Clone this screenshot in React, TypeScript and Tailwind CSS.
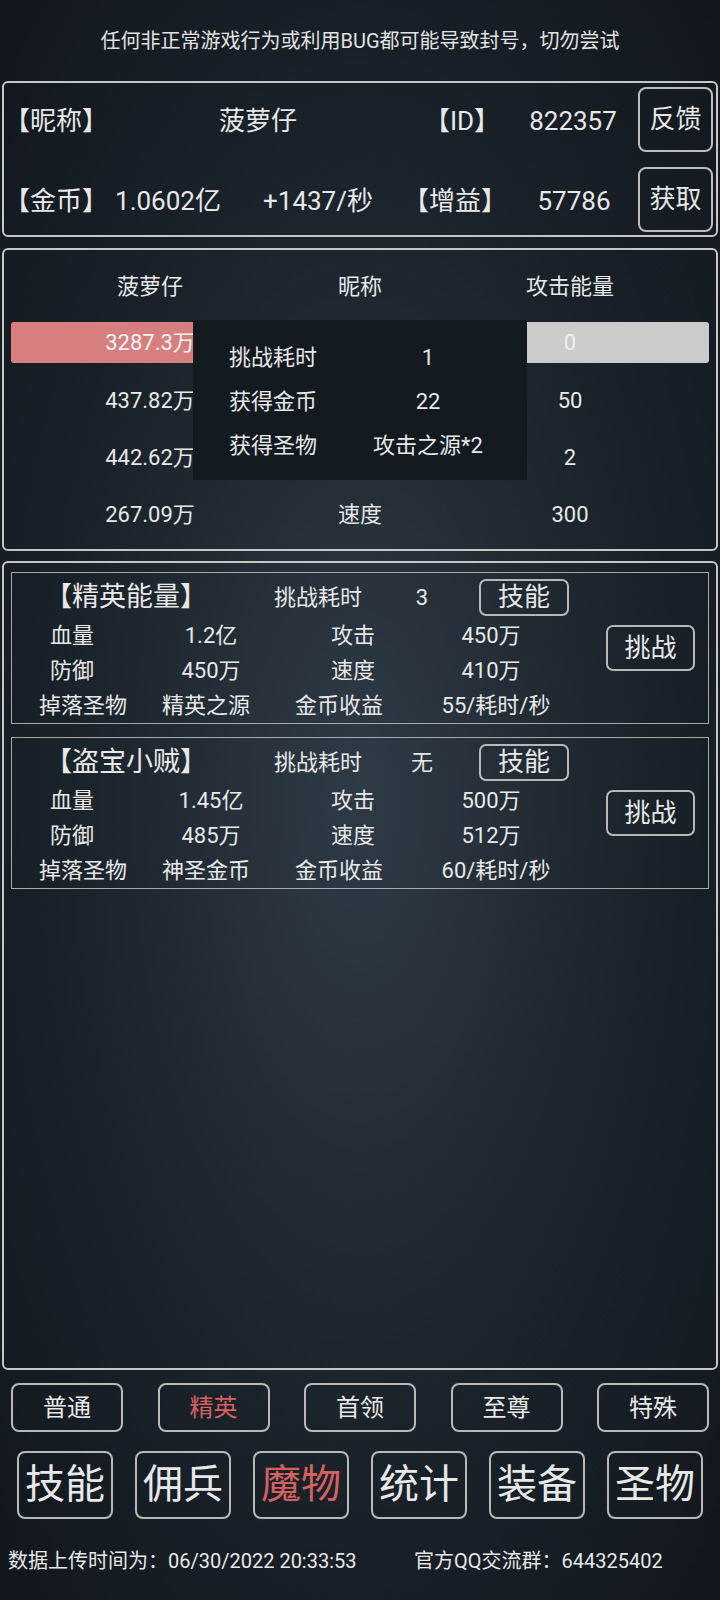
import React from "react";

type Cell = { t: string; w: string };

function CardRow({ cells }: { cells: Cell[] }) {
  return (
    <div className="h-[35px] flex items-center text-[22px]">
      {cells.map((c, i) => (
        <div key={i} className={`${c.w} text-center whitespace-nowrap`}>
          {c.t}
        </div>
      ))}
    </div>
  );
}

function MonsterCard({
  name,
  cost,
  hp,
  atk,
  def,
  spd,
  drop,
  gold,
}: {
  name: string;
  cost: string;
  hp: string;
  atk: string;
  def: string;
  spd: string;
  drop: string;
  gold: string;
}) {
  return (
    <div className="h-[152px] border border-[#a9a9a9] flex">
      <div className="w-[569px] flex flex-col pt-[6px]">
        <div className="h-[37px] flex items-center">
          <div className="w-[228px] text-center text-[27px] whitespace-nowrap">【{name}】</div>
          <div className="w-[156px] text-center text-[22px]">挑战耗时</div>
          <div className="w-[52px] text-center text-[22px]">{cost}</div>
          <div className="ml-[31px] w-[90px] h-[37px] border-2 border-[#b8b8b8] rounded-[7px] flex items-center justify-center text-[26px]">
            技能
          </div>
        </div>
        <div className="mt-[2px]">
          <CardRow
            cells={[
              { t: "血量", w: "w-[120px]" },
              { t: hp, w: "w-[158px]" },
              { t: "攻击", w: "w-[126px]" },
              { t: atk, w: "w-[150px]" },
            ]}
          />
          <CardRow
            cells={[
              { t: "防御", w: "w-[120px]" },
              { t: def, w: "w-[158px]" },
              { t: "速度", w: "w-[126px]" },
              { t: spd, w: "w-[150px]" },
            ]}
          />
          <CardRow
            cells={[
              { t: "掉落圣物", w: "w-[142px]" },
              { t: drop, w: "w-[104px]" },
              { t: "金币收益", w: "w-[162px]" },
              { t: gold, w: "w-[152px]" },
            ]}
          />
        </div>
      </div>
      <div className="pl-[25px] pt-[52px]">
        <div className="w-[89px] h-[46px] border-2 border-[#b8b8b8] rounded-[7px] flex items-center justify-center text-[26px]">
          挑战
        </div>
      </div>
    </div>
  );
}

export default function App() {
  const tabs = ["普通", "精英", "首领", "至尊", "特殊"];
  const nav = ["技能", "佣兵", "魔物", "统计", "装备", "圣物"];
  return (
    <div className="w-[720px] h-[1600px] flex flex-col overflow-hidden text-[#e8e8e8] font-['Roboto','Noto_Sans_CJK_SC',sans-serif] bg-[radial-gradient(ellipse_at_center,#2e3b46_0%,#1b232b_55%,#11171c_100%)]">
      <div className="h-[81px] shrink-0 flex items-center justify-center text-[20px] text-[#e2e2e2]">
        任何非正常游戏行为或利用BUG都可能导致封号，切勿尝试
      </div>

      {/* Panel 1 */}
      <div className="shrink-0 mx-[2px] h-[156px] border-2 border-[#c6c6c6] rounded-[6px] flex flex-col pt-[4px] gap-[15px] text-[26px]">
        <div className="h-[65px] flex items-center">
          <div className="w-[96px] text-center whitespace-nowrap pt-[3px]">【昵称】</div>
          <div className="w-[316px] text-center pt-[3px]">菠萝仔</div>
          <div className="w-[92px] text-center whitespace-nowrap pt-[3px]">【ID】</div>
          <div className="w-[130px] text-center pt-[3px]">822357</div>
          <div className="w-[75px] h-[65px] border-2 border-[#bdbdbd] rounded-[8px] flex items-center justify-center">
            反馈
          </div>
        </div>
        <div className="h-[65px] flex items-center">
          <div className="w-[96px] text-center whitespace-nowrap pt-[3px]">【金币】</div>
          <div className="w-[136px] text-center whitespace-nowrap pt-[3px]">1.0602亿</div>
          <div className="w-[164px] text-center whitespace-nowrap pt-[3px]">+1437/秒</div>
          <div className="w-[110px] text-center whitespace-nowrap pt-[3px]">【增益】</div>
          <div className="w-[128px] text-center pt-[3px]">57786</div>
          <div className="w-[75px] h-[65px] border-2 border-[#bdbdbd] rounded-[8px] flex items-center justify-center">
            获取
          </div>
        </div>
      </div>

      {/* Panel 2 */}
      <div className="shrink-0 relative mt-[11px] mx-[2px] h-[303px] border-2 border-[#c6c6c6] rounded-[6px] text-[22px]">
        <div className="h-[72px] grid grid-cols-[292px_128px_292px] items-center text-center">
          <div>菠萝仔</div>
          <div>昵称</div>
          <div>攻击能量</div>
        </div>
        <div className="mx-[7px] h-[41px] rounded-[3px] bg-[linear-gradient(to_right,#d77f7f_50%,#cbcbcb_50%)] grid grid-cols-[278px_142px_278px] items-center text-center">
          <div className="text-[#f4f4f4]">3287.3万</div>
          <div></div>
          <div className="text-[#eeeeee]">0</div>
        </div>
        <div className="mt-[9px]">
          {[
            ["437.82万", "", "50"],
            ["442.62万", "", "2"],
            ["267.09万", "速度", "300"],
          ].map((r, i) => (
            <div key={i} className="h-[57px] grid grid-cols-[292px_128px_292px] items-center text-center">
              <div>{r[0]}</div>
              <div>{r[1]}</div>
              <div>{r[2]}</div>
            </div>
          ))}
        </div>
        <div className="absolute left-[189px] top-[70px] w-[334px] h-[160px] bg-[#131a20] pt-[15px] flex flex-col">
          {[
            ["挑战耗时", "1"],
            ["获得金币", "22"],
            ["获得圣物", "攻击之源*2"],
          ].map((r, i) => (
            <div key={i} className="h-[44px] flex items-center">
              <div className="ml-[36px] w-[88px] whitespace-nowrap">{r[0]}</div>
              <div className="ml-[23px] w-[176px] text-center whitespace-nowrap">{r[1]}</div>
            </div>
          ))}
        </div>
      </div>

      {/* Panel 3 */}
      <div className="shrink-0 mt-[10px] mx-[2px] h-[809px] border-2 border-[#c6c6c6] rounded-[6px] pt-[9px] px-[7px] flex flex-col gap-[13px]">
        <MonsterCard
          name="精英能量"
          cost="3"
          hp="1.2亿"
          atk="450万"
          def="450万"
          spd="410万"
          drop="精英之源"
          gold="55/耗时/秒"
        />
        <MonsterCard
          name="盗宝小贼"
          cost="无"
          hp="1.45亿"
          atk="500万"
          def="485万"
          spd="512万"
          drop="神圣金币"
          gold="60/耗时/秒"
        />
      </div>

      {/* Tabs */}
      <div className="shrink-0 mt-[13px] h-[49px] px-[11px] flex justify-between">
        {tabs.map((t) => (
          <div
            key={t}
            className={`w-[112px] h-[49px] border-2 border-[#b9b9b9] rounded-[8px] flex items-center justify-center text-[24px] ${
              t === "精英" ? "text-[#d5605f]" : ""
            }`}
          >
            {t}
          </div>
        ))}
      </div>

      {/* Nav */}
      <div className="shrink-0 mt-[19px] h-[68px] px-[17px] flex justify-between">
        {nav.map((t) => (
          <div
            key={t}
            className={`w-[96px] h-[68px] border-2 border-[#b9b9b9] rounded-[8px] flex items-center justify-center text-[40px] ${
              t === "魔物" ? "text-[#d5605f]" : ""
            }`}
          >
            {t}
          </div>
        ))}
      </div>

      {/* Footer */}
      <div className="flex-1 flex items-center pl-[8px] pt-[3px] text-[20px] whitespace-nowrap">
        <div className="w-[406px]">数据上传时间为：06/30/2022 20:33:53</div>
        <div>官方QQ交流群：644325402</div>
      </div>
    </div>
  );
}
